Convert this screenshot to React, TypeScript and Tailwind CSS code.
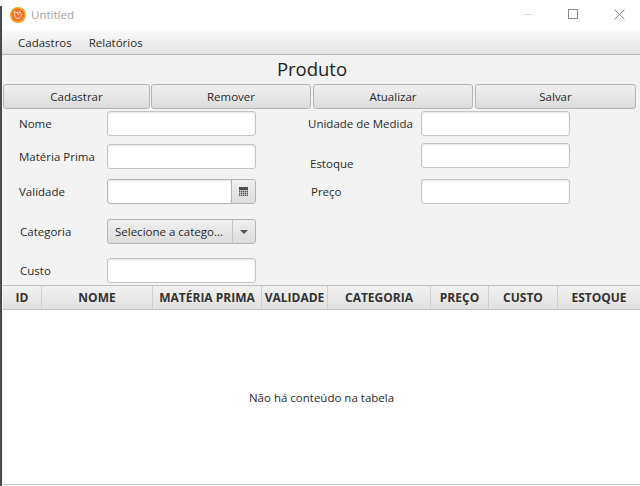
const inputCls = "h-[25px] w-[149px] rounded-[3px] border border-[#c4c4c4] bg-white shadow-[inset_0_1px_2px_#e4e4e4]";
const btn = "flex h-[25px] items-center justify-center rounded-[3px] border border-[#b4b4b4] bg-gradient-to-b from-[#f0f0f0] to-[#dcdcdc] text-[#2a2a2a]";

const cols: [string, string][] = [
  ["ID", "w-[39px]"],
  ["NOME", "w-[111px]"],
  ["MATÉRIA PRIMA", "w-[109px]"],
  ["VALIDADE", "w-[66px]"],
  ["CATEGORIA", "w-[103px]"],
  ["PREÇO", "w-[58px]"],
  ["CUSTO", "w-[69px]"],
  ["ESTOQUE", "w-[82px]"],
];

function Logo() {
  return (
    <svg width="16" height="16" viewBox="0 0 16 16" className="shrink-0">
      <circle cx="8" cy="8" r="8" fill="#f9a51c" />
      <circle cx="8" cy="8" r="6.2" fill="#f0702b" />
      <path d="M4.4 4.6 L6.8 5.6 L10 5 L11.4 7.6 C11.4 10 9.8 11.4 8 11.4 C6 11.4 4.6 9.8 4.8 7.8 Z M6.8 5.6 L9 8" fill="none" stroke="#ffe9dc" strokeWidth="0.9" />
    </svg>
  );
}

export default function App() {
  return (
    <div className="flex h-[486px] w-[640px] overflow-hidden bg-white text-[11.5px] text-[#2a2a2a]" style={{ fontFamily: '"Open Sans", "Noto Sans", sans-serif' }}>
      <div className="mt-[6px] w-[2px] shrink-0 bg-[#4a4a4a]" />
      <div className="flex min-w-0 flex-1 flex-col">
        <div className="flex h-[30px] shrink-0 items-center bg-white pl-[8px]">
          <Logo />
          <span className="ml-[5px] text-[#a0a0a8]">Untitled</span>
          <div className="ml-auto flex items-center pb-[2px]">
            <div className="h-px w-[10px] bg-[#dedede]" />
            <div className="ml-[35px] h-[10px] w-[10px] border border-[#8a8a8a]" />
            <svg width="11" height="11" viewBox="0 0 11 11" className="ml-[36px] mr-[15px]">
              <path d="M.5.5l10 10M10.5.5l-10 10" stroke="#8a8a8a" strokeWidth="1" />
            </svg>
          </div>
        </div>
        <div className="flex h-[25px] shrink-0 items-center gap-[17px] border-b border-[#b8b8b8] bg-gradient-to-b from-[#fafafa] to-[#e4e4e4] pl-[16px] pt-[2px]">
          <span>Cadastros</span>
          <span>Relatórios</span>
        </div>
        <div className="flex flex-1 flex-col bg-[#f3f3f3]">
          <div className="flex h-[29px] shrink-0 items-center justify-center pr-[18px] text-[18.5px] leading-none text-[#222]">Produto</div>
          <div className="flex shrink-0 pl-px">
            <div className={`${btn} w-[147px]`}>Cadastrar</div>
            <div className={`${btn} ml-px w-[160px]`}>Remover</div>
            <div className={`${btn} ml-[2px] w-[160px]`}>Atualizar</div>
            <div className={`${btn} ml-[2px] w-[161px]`}>Salvar</div>
          </div>
          <div className="flex h-[176px] shrink-0">
            <div className="flex w-[306px] flex-col pt-[2px]">
              <div className="flex items-center pl-[17px]">
                <span className="w-[88px] pt-px">Nome</span>
                <div className={inputCls} />
              </div>
              <div className="mt-[8px] flex items-center pl-[17px]">
                <span className="w-[88px]">Matéria Prima</span>
                <div className={inputCls} />
              </div>
              <div className="mt-[10px] flex items-center pl-[17px]">
                <span className="w-[88px] pt-px">Validade</span>
                <div className="flex h-[25px] w-[149px] overflow-hidden rounded-[3px] border border-[#b4b4b4] bg-white">
                  <div className="flex-1 shadow-[inset_0_1px_2px_#e4e4e4]" />
                  <div className="flex w-[24px] items-center justify-center border-l border-[#b4b4b4] bg-gradient-to-b from-[#f0f0f0] to-[#dcdcdc]">
                    <svg width="9" height="9" viewBox="0 0 9 9">
                      <rect width="9" height="9" fill="#4f4f4f" />
                      <path d="M0 3.5h9M0 5.5h9M0 7.5h9M1.5 3v6M3.5 3v6M5.5 3v6M7.5 3v6" stroke="#e0e0e0" strokeWidth=".6" />
                    </svg>
                  </div>
                </div>
              </div>
              <div className="mt-[15px] flex items-center pl-[18px]">
                <span className="w-[87px]">Categoria</span>
                <div className="flex h-[25px] w-[149px] items-stretch overflow-hidden rounded-[3px] border border-[#b4b4b4] bg-gradient-to-b from-[#f0f0f0] to-[#dcdcdc]">
                  <span className="flex flex-1 items-center whitespace-nowrap pl-[7px]">Selecione a catego...</span>
                  <div className="flex w-[23px] items-center justify-center border-l border-[#c4c4c4]">
                    <div className="h-0 w-0 border-x-[4px] border-t-[4px] border-x-transparent border-t-[#555]" />
                  </div>
                </div>
              </div>
              <div className="mt-[14px] flex items-center pl-[18px]">
                <span className="w-[87px] pt-px">Custo</span>
                <div className={inputCls} />
              </div>
            </div>
            <div className="flex flex-col pt-[2px]">
              <div className="flex items-center">
                <span className="w-[113px] pt-px">Unidade de Medida</span>
                <div className={inputCls} />
              </div>
              <div className="mt-[7px] flex h-[25px] items-start">
                <span className="mt-[12px] w-[113px] pl-[2px]">Estoque</span>
                <div className={inputCls} />
              </div>
              <div className="mt-[11px] flex items-center">
                <span className="w-[113px] pl-[3px]">Preço</span>
                <div className={inputCls} />
              </div>
            </div>
          </div>
          <div className="ml-px flex h-[25px] shrink-0 border-y border-[#c0c0c0] bg-gradient-to-b from-[#f2f2f2] to-[#e0e0e0]">
            {cols.map(([t, w]) => (
              <div key={t} className={`${w} flex shrink-0 items-center justify-center whitespace-nowrap border-r border-[#cfcfcf] pt-px text-[12px] font-bold text-[#333] last:border-r-0`}>{t}</div>
            ))}
          </div>
          <div className="ml-px flex flex-1 items-center justify-center bg-white pt-px">Não há conteúdo na tabela</div>
          <div className="ml-px h-[2px] shrink-0 border-t border-[#c4c4c4] bg-white" />
        </div>
      </div>
    </div>
  );
}
